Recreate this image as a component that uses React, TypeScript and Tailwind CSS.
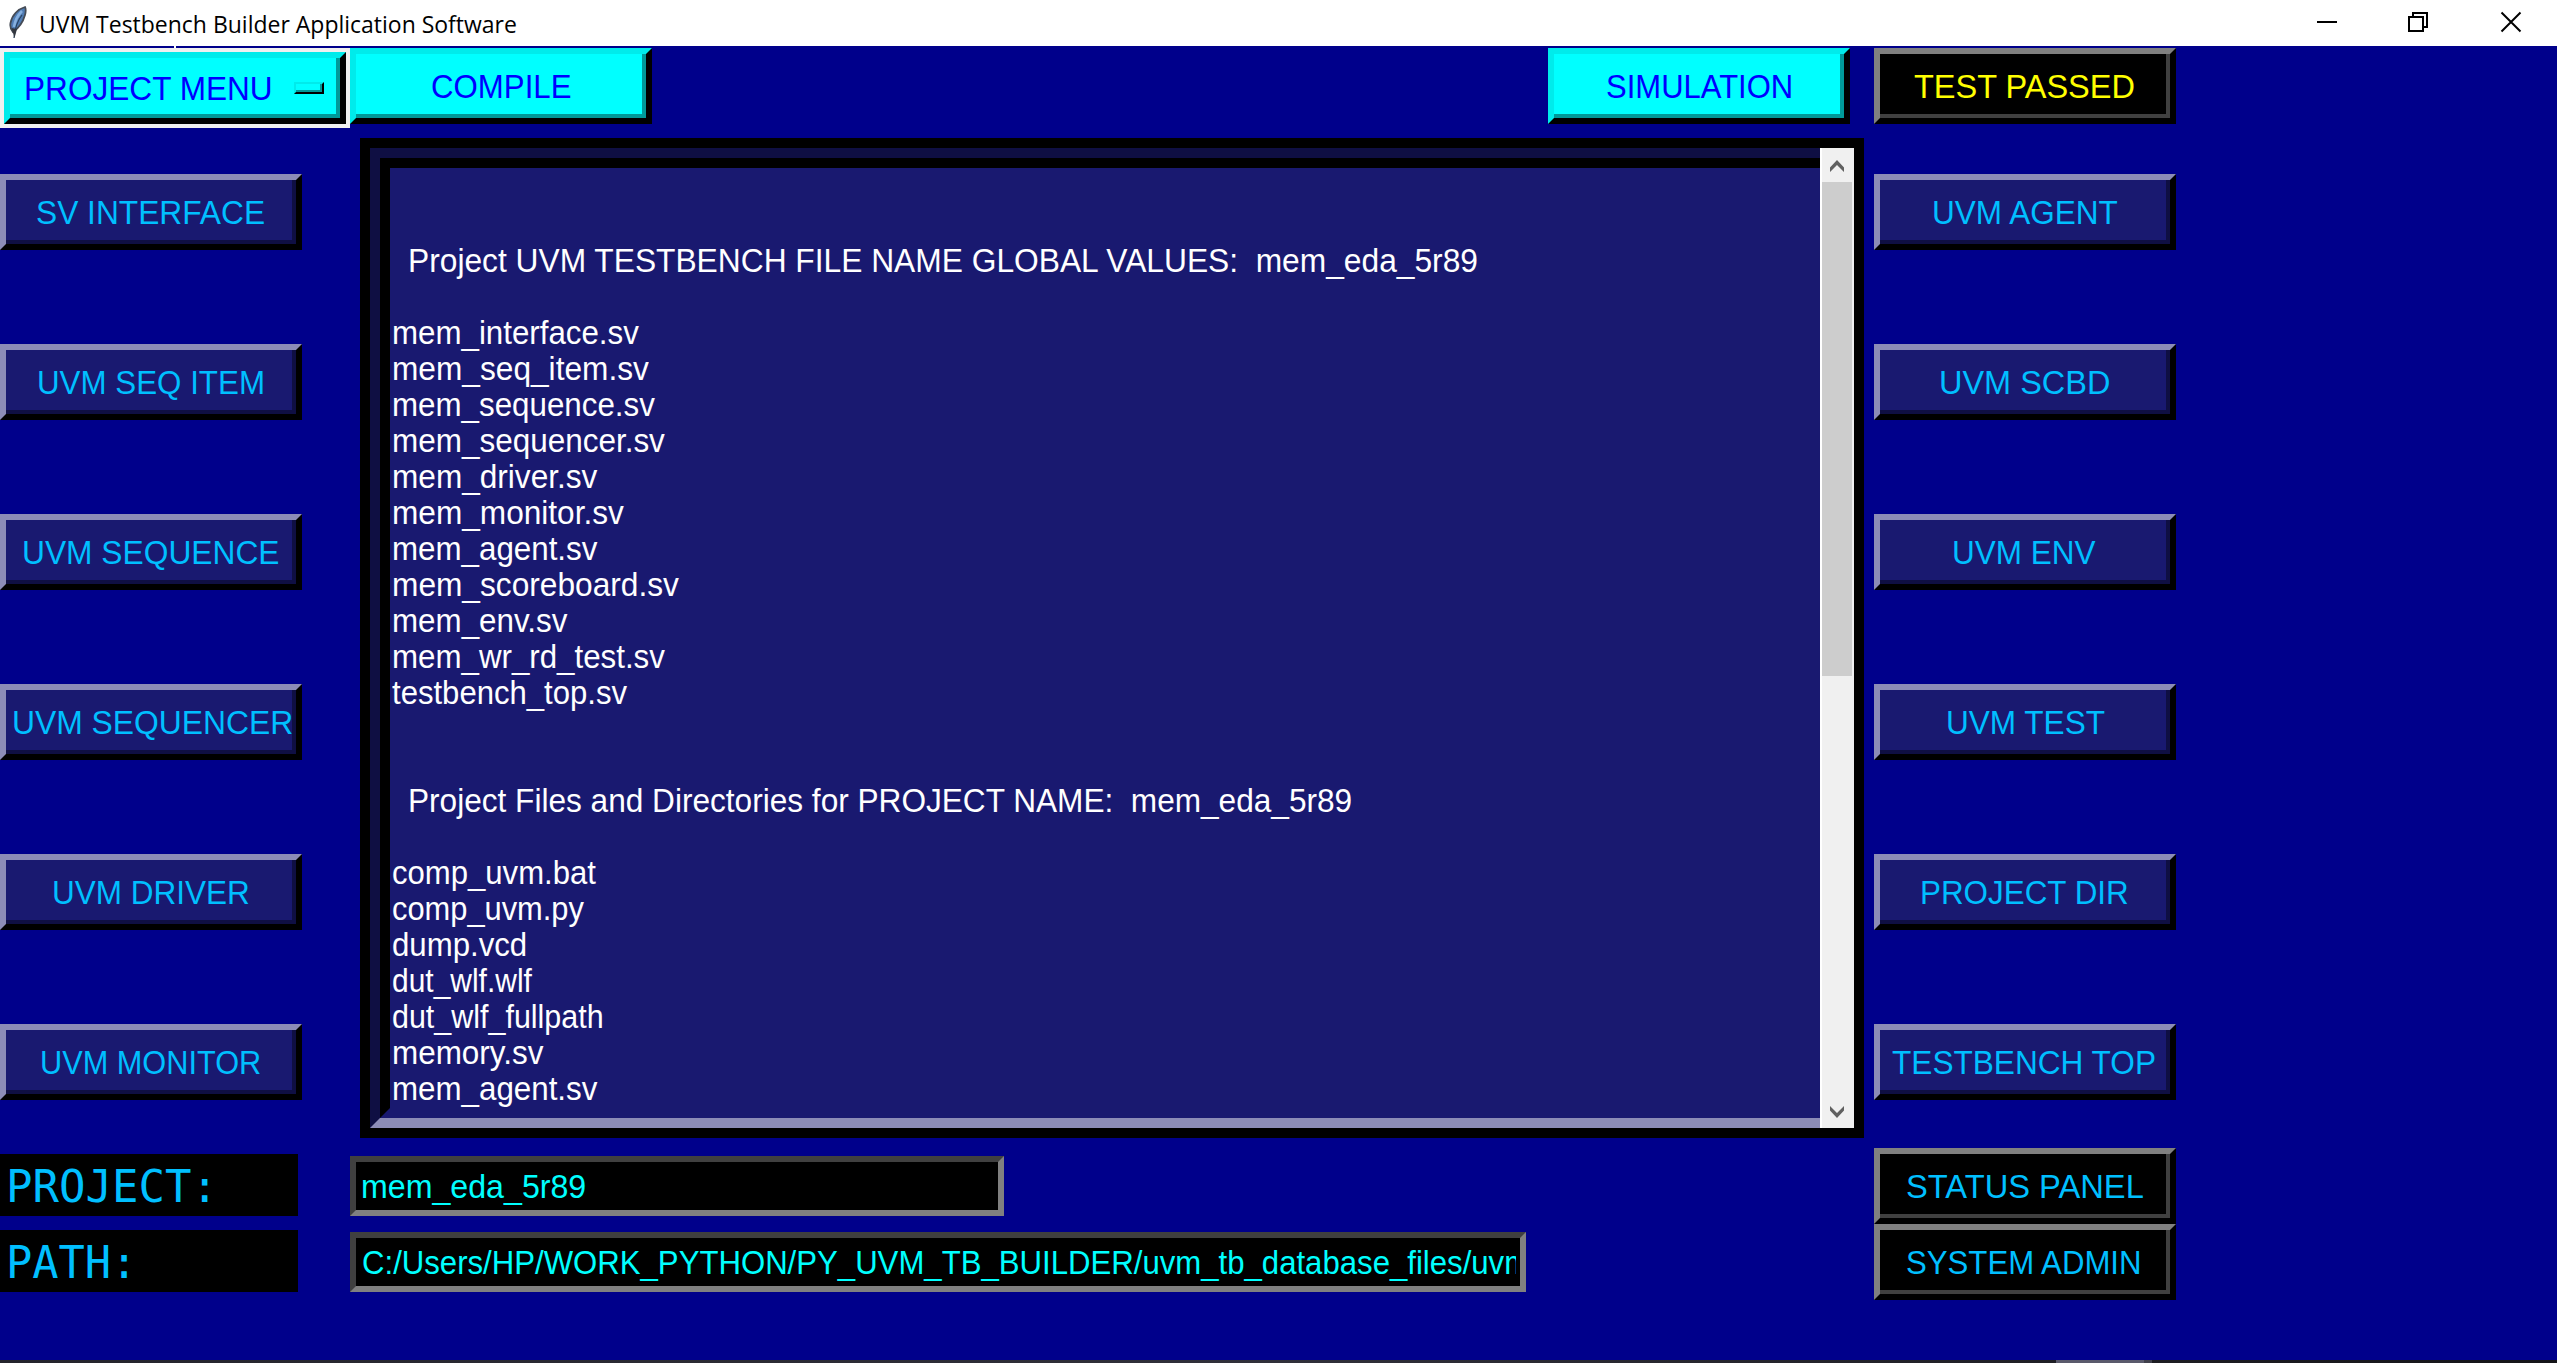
import type { ReactNode } from 'react';

const SANS = '"Liberation Sans", Arial, sans-serif';
const MONO = '"DejaVu Sans Mono", monospace';
const TITLE = '"Open Sans", "Noto Sans", sans-serif';

const ctx = document.createElement('canvas').getContext('2d')!;

/* A line of text whose visible glyphs start at `x` and span `w` pixels. */
function Fit({ text, x, w, size = 34, family = SANS, top = 0 }: { text: string; x: number; w: number; size?: number; family?: string; top?: number }) {
  ctx.font = `${size}px ${family}`;
  const m = ctx.measureText(text);
  const scale = w / (m.actualBoundingBoxRight + m.actualBoundingBoxLeft);
  return (
    <span
      className="block w-max origin-left whitespace-pre leading-[36px]"
      style={{
        fontFamily: family,
        fontSize: size,
        marginLeft: x + m.actualBoundingBoxLeft * scale,
        marginTop: top,
        transform: `scaleX(${scale})`,
      }}
    >
      {text}
    </span>
  );
}

type Tone = 'navy' | 'cyan' | 'black' | 'yellow';

const OUTER: Record<Tone, string> = {
  navy: 'border-t-[#8c8cb7] border-l-[#8c8cb7] bg-[#191970] text-[#00bfff]',
  cyan: 'border-t-[#00ebeb] border-l-[#00ebeb] bg-[#00ffff] text-[#0000ff]',
  black: 'border-t-[#808080] border-l-[#808080] bg-black text-[#00bfff]',
  yellow: 'border-t-[#808080] border-l-[#808080] bg-black text-[#ffff00]',
};
const INNER: Record<Tone, string> = {
  navy: 'border-[#0f0f43]',
  cyan: 'border-[#009999]',
  black: 'border-[#404040]',
  yellow: 'border-[#404040]',
};

function Bevel({ tone, size, children }: { tone: Tone; size: string; children: ReactNode }) {
  return (
    <button className={`block shrink-0 border-[6px] border-r-black border-b-black text-left ${size} ${OUTER[tone]}`}>
      <span className={`flex h-full w-full border-r-4 border-b-4 ${INNER[tone]}`}>{children}</span>
    </button>
  );
}

function Btn({ label, tone = 'navy', x, w }: { label: string; tone?: Tone; x: number; w: number }) {
  return (
    <Bevel tone={tone} size="h-[76px] w-[302px]">
      <Fit text={label} x={x - 6} w={w} top={14} />
    </Bevel>
  );
}

type Item = [label: string, x: number, w: number];

const leftButtons: Item[] = [
  ['SV INTERFACE', 37, 227.5],
  ['UVM SEQ ITEM', 39, 224],
  ['UVM SEQUENCE', 23.5, 255],
  ['UVM SEQUENCER', 13.5, 278],
  ['UVM DRIVER', 53.5, 194.5],
  ['UVM MONITOR', 41.5, 218],
];

const rightButtons: Item[] = [
  ['UVM AGENT', 59.5, 185],
  ['UVM SCBD', 67, 168],
  ['UVM ENV', 80, 142],
  ['UVM TEST', 73.5, 157],
  ['PROJECT DIR', 48, 206],
  ['TESTBENCH TOP', 18, 263],
];

const log: (Item | null)[] = [
  null,
  null,
  ['Project UVM TESTBENCH FILE NAME GLOBAL VALUES:  mem_eda_5r89', 20, 1069],
  null,
  ['mem_interface.sv', 3.5, 245],
  ['mem_seq_item.sv', 3.5, 255],
  ['mem_sequence.sv', 3.5, 261],
  ['mem_sequencer.sv', 3.5, 271],
  ['mem_driver.sv', 3.5, 203.5],
  ['mem_monitor.sv', 3.5, 230],
  ['mem_agent.sv', 3.5, 203.5],
  ['mem_scoreboard.sv', 3.5, 285],
  ['mem_env.sv', 3.5, 173.5],
  ['mem_wr_rd_test.sv', 3.5, 271],
  ['testbench_top.sv', 2, 235],
  null,
  null,
  ['Project Files and Directories for PROJECT NAME:  mem_eda_5r89', 20, 942],
  null,
  ['comp_uvm.bat', 3, 203.5],
  ['comp_uvm.py', 3, 191],
  ['dump.vcd', 3, 132.5],
  ['dut_wlf.wlf', 3, 139.5],
  ['dut_wlf_fullpath', 3, 209],
  ['memory.sv', 3.5, 149.5],
  ['mem_agent.sv', 3.5, 203.5],
];

function TitleBar() {
  return (
    <header className="flex h-[46px] items-start bg-white text-black">
      <svg width="20" height="34" viewBox="0 0 20 34" className="mt-[6px] ml-2 shrink-0">
        <path d="M17 1 C10 3 4 9 2.5 17 C1.8 21 3 24 5 26 C11 22 15 16 17 9 C17.8 6 18 3 17 1Z" fill="#4f7cb4" stroke="#454b55" strokeWidth="1.8" />
        <path d="M14 5 C10 9 7 14 6 21" stroke="#86b0e0" strokeWidth="2.6" fill="none" />
        <path d="M14 9 C10 14 7 20 6 32" stroke="#27405f" strokeWidth="1.2" fill="none" />
        <path d="M3.5 22 L6.5 32 L9 23Z" fill="#333840" />
      </svg>
      <div className="w-[2287px] shrink-0">
        <Fit text="UVM Testbench Builder Application Software" x={12.5} w={475} size={23} family={TITLE} top={6} />
      </div>
      <svg width="206" height="46" viewBox="2315 0 206 46" className="shrink-0 overflow-visible" fill="none" stroke="#000" strokeWidth="2">
        <path d="M2317 22H2337" />
        <path d="M2409 17H2423V31H2409ZM2413 17V13H2427V27H2423" />
        <path d="M2501.5 12.5L2520.5 31.5M2520.5 12.5L2501.5 31.5" />
      </svg>
    </header>
  );
}

function Chevron({ down = false }: { down?: boolean }) {
  return (
    <span className={`flex h-[34px] w-[30px] shrink-0 items-center justify-center ${down ? 'pt-[2px]' : 'pt-[1px]'}`}>
      <svg width="14" height="12" viewBox="0 0 14 12" className={down ? 'rotate-180' : ''}>
        <path d="M7 0L14 7.5V12L7 5L0 12V7.5Z" fill="#606060" />
      </svg>
    </span>
  );
}

export default function App() {
  return (
    <div className="flex h-[1363px] w-[2557px] flex-col overflow-hidden bg-[#00008b]">
      <TitleBar />
      <div className="h-[2px] shrink-0 pl-[174px]">
        <div className="h-[2px] w-[2px] bg-white" />
      </div>

      <div className="flex h-[80px] shrink-0 items-start">
        <div className="h-[80px] w-[350px] shrink-0 border-4 border-[#f0f0f0]">
          <Bevel tone="cyan" size="h-[72px] w-[342px]">
            <span className="w-[284px] shrink-0">
              <Fit text="PROJECT MENU" x={15.5} w={245} top={12} />
            </span>
            <span className="mt-[24px] block h-[12px] w-[30px] border-2 border-t-[#00ebeb] border-r-black border-b-black border-l-[#00ebeb]">
              <span className="block h-full w-full border-r-2 border-b-2 border-[#009999]" />
            </span>
          </Bevel>
        </div>
        <Btn label="COMPILE" tone="cyan" x={81.5} w={139} />
        <div className="ml-[896px] flex gap-6">
          <Btn label="SIMULATION" tone="cyan" x={58.5} w={184} />
          <Btn label="TEST PASSED" tone="yellow" x={40} w={220} />
        </div>
      </div>

      <main className="flex h-[1010px] shrink-0 items-start">
        <nav className="flex w-[360px] shrink-0 flex-col gap-[94px] pt-[46px]">
          {leftButtons.map(([l, x, w]) => <Btn key={l} label={l} x={x} w={w} />)}
        </nav>

        <section className="mt-[10px] flex h-[1000px] w-[1504px] shrink-0 border-[10px] border-black bg-[#191970]">
          <div className="h-[980px] w-[1450px] shrink-0 border-t-[10px] border-b-[10px] border-l-[10px] border-t-[#0f0f43] border-b-[#8c8cb7] border-l-[#0f0f43]">
            <div className="h-[960px] overflow-hidden border-t-[10px] border-b-[10px] border-l-[10px] border-t-black border-b-[#191970] border-l-black pt-[2px] text-white">
              {log.map((row, i) => (
                <div key={i} className="h-[36px]">
                  {row && <Fit text={row[0]} x={row[1]} w={row[2]} />}
                </div>
              ))}
            </div>
          </div>
          <div className="flex h-[980px] w-[34px] shrink-0 flex-col border-l-2 border-white bg-[#f0f0f0]">
            <Chevron />
            <div className="h-[494px] w-[30px] bg-[#cdcdcd]" />
            <div className="grow" />
            <Chevron down />
          </div>
        </section>

        <nav className="ml-[10px] flex shrink-0 flex-col gap-[94px] pt-[46px]">
          {rightButtons.map(([l, x, w]) => <Btn key={l} label={l} x={x} w={w} />)}
        </nav>
      </main>

      <footer className="flex h-[222px] shrink-0 items-start">
        <div className="flex w-[350px] shrink-0 flex-col gap-[14px] pt-[16px] text-[#00bfff]">
          <div className="flex h-[62px] w-[298px] bg-black">
            <Fit text="PROJECT:" x={10} w={197.5} size={44} family={MONO} top={15} />
          </div>
          <div className="flex h-[62px] w-[298px] bg-black">
            <Fit text="PATH:" x={10} w={117} size={44} family={MONO} top={15} />
          </div>
        </div>
        <div className="flex w-[1524px] shrink-0 flex-col gap-4 pt-[18px] text-[#00ffff]">
          <div className="flex h-[60px] w-[654px] overflow-hidden border-[6px] border-t-[#404040] border-r-[#808080] border-b-[#808080] border-l-[#404040] bg-black">
            <Fit text="mem_eda_5r89" x={7} w={222.5} top={6} />
          </div>
          <div className="h-[60px] w-[1176px] border-[6px] border-t-[#404040] border-r-[#808080] border-b-[#808080] border-l-[#404040] bg-black pr-1">
            <div className="flex h-[48px] overflow-hidden">
              <Fit text="C:/Users/HP/WORK_PYTHON/PY_UVM_TB_BUILDER/uvm_tb_database_files/uvm" x={7} w={1166} top={6} />
            </div>
          </div>
        </div>
        <div className="flex shrink-0 flex-col pt-[10px]">
          <Btn label="STATUS PANEL" tone="black" x={33} w={236} />
          <Btn label="SYSTEM ADMIN" tone="black" x={33} w={234} />
        </div>
      </footer>

      <div className="flex h-[3px] shrink-0 bg-gradient-to-r from-[#24242c] via-[#30303a] to-[#141418]">
        <div className="ml-[2056px] h-[3px] w-[88px] bg-[#5a5a6c]" />
        <div className="h-[3px] w-[8px] bg-[#40404c]" />
      </div>
    </div>
  );
}
